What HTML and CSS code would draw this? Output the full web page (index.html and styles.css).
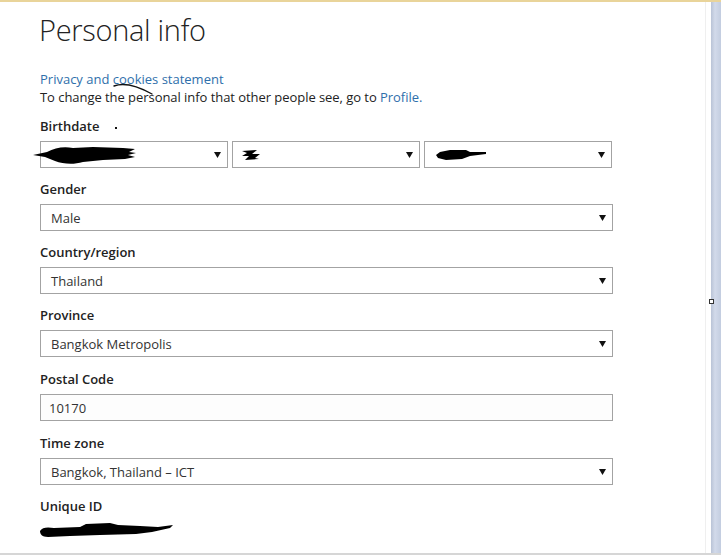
FILE: index.html
```html
<!DOCTYPE html>
<html>
<head>
<meta charset="utf-8">
<link rel="stylesheet" href="styles.css">
</head>
<body>
<div class="window">
  <div class="content">
    <h1 class="title">Personal info</h1>
    <div class="intro">
      <a class="link privacy" href="#">Privacy and cookies statement</a>
      <svg class="pen-stroke" width="44" height="14" viewBox="0 0 44 14"><path d="M2 4 C 10 1, 22 2, 40 12" fill="none" stroke="#111" stroke-width="1.4" stroke-linecap="round"/></svg>
      <p class="note">To change the personal info that other people see, go to <a class="link" href="#">Profile.</a></p>
    </div>

    <div class="field">
      <div class="label">Birthdate <span class="dot"></span></div>
      <div class="row3">
        <div class="select">
          <svg class="redact r1" width="104" height="22" viewBox="0 0 104 22"><path d="M0 11 L14 8 C 22 4, 30 2, 40 4 L 60 3 L 90 4 L 102 5 L 96 8 L 103 9 L 95 11 L 102 13 L 92 15 L 70 16 L 50 18 C 40 21, 30 20, 22 17 L 12 13 Z" fill="#000"/></svg>
          <svg class="arrow" width="7" height="6" viewBox="0 0 7 6"><path d="M0 0 H7 L3.5 6 Z" fill="#111"/></svg>
        </div>
        <div class="select">
          <svg class="redact r2" width="20" height="12" viewBox="0 0 20 12"><path d="M1 2 L16 1 L11 5 L19 5 L14 9 L18 10 L4 11 L8 7 L1 7 L6 4 Z" fill="#000"/></svg>
          <svg class="arrow" width="7" height="6" viewBox="0 0 7 6"><path d="M0 0 H7 L3.5 6 Z" fill="#111"/></svg>
        </div>
        <div class="select">
          <svg class="redact r3" width="52" height="12" viewBox="0 0 52 12"><path d="M0 6 L4 3 L14 1 L30 1 L34 3 L50 3 L50 5 L34 7 L26 10 L10 11 L2 9 Z" fill="#000"/></svg>
          <svg class="arrow" width="7" height="6" viewBox="0 0 7 6"><path d="M0 0 H7 L3.5 6 Z" fill="#111"/></svg>
        </div>
      </div>
    </div>

    <div class="field">
      <div class="label">Gender</div>
      <div class="select"><span class="value">Male</span><svg class="arrow" width="7" height="6" viewBox="0 0 7 6"><path d="M0 0 H7 L3.5 6 Z" fill="#111"/></svg></div>
    </div>

    <div class="field">
      <div class="label">Country/region</div>
      <div class="select"><span class="value">Thailand</span><svg class="arrow" width="7" height="6" viewBox="0 0 7 6"><path d="M0 0 H7 L3.5 6 Z" fill="#111"/></svg></div>
    </div>

    <div class="field">
      <div class="label">Province</div>
      <div class="select"><span class="value">Bangkok Metropolis</span><svg class="arrow" width="7" height="6" viewBox="0 0 7 6"><path d="M0 0 H7 L3.5 6 Z" fill="#111"/></svg></div>
    </div>

    <div class="field wide-gap">
      <div class="label">Postal Code</div>
      <div class="input"><span class="value">10170</span></div>
    </div>

    <div class="field wide-gap">
      <div class="label">Time zone</div>
      <div class="select"><span class="value">Bangkok, Thailand – ICT</span><svg class="arrow" width="7" height="6" viewBox="0 0 7 6"><path d="M0 0 H7 L3.5 6 Z" fill="#111"/></svg></div>
    </div>

    <div class="field last">
      <div class="label">Unique ID</div>
      <svg class="redact r4" width="134" height="16" viewBox="0 0 134 16"><path d="M0 9 C 2 5, 8 5, 14 6 L 40 5 L 46 2 L 70 1 L 78 3 L 100 4 L 118 5 L 133 3 L 130 6 L 112 10 L 96 12 L 60 13 L 30 14 L 8 15 C 2 15, 0 12, 0 9 Z" fill="#000"/></svg>
    </div>
  </div>
  <div class="scroll"><span class="handle"></span></div>
</div>
</body>
</html>
```
FILE: styles.css
```css
* { box-sizing: border-box; }
html, body { margin: 0; padding: 0; background: #fff; }
body {
  width: 721px;
  height: 555px;
  overflow: hidden;
  font-family: "Open Sans", "Noto Sans", sans-serif;
  color: #222;
}
.window {
  display: flex;
  width: 721px;
  height: 555px;
  border-top: 2px solid #e9d49a;
  border-bottom: 2px solid #d6d6d6;
}
.content {
  flex: 1;
  border-right: 1px solid #efefef;
  margin-right: 5px;
  padding-left: 40px;
  display: flex;
  flex-direction: column;
}
.title {
  margin: 8px 0 0 -1px;
  font-size: 29px;
  font-weight: 300;
  line-height: 40px;
  color: #222;
  letter-spacing: -0.3px;
}
.intro {
  position: relative;
  margin-top: 20px;
  font-size: 13px;
  line-height: 18px;
}
.link { color: #2f6fab; text-decoration: none; }
.privacy { display: block; }
.pen-stroke { position: absolute; left: 72px; top: 12px; }
.note { margin: 0; color: #222; letter-spacing: -0.05px; }
.field {
  display: flex;
  flex-direction: column;
  margin-top: 11px;
}
.field + .field { margin-top: 12px; }
.field.wide-gap { margin-top: 13px; }
.label {
  font-size: 13px;
  font-weight: 600;
  line-height: 18px;
  margin-bottom: 6px;
  color: #222;
  position: relative;
}
.dot {
  position: absolute;
  left: 75px;
  top: 10px;
  width: 2px;
  height: 2px;
  background: #111;
}
.row3 {
  display: grid;
  grid-template-columns: repeat(3, 188px);
  gap: 4px;
}
.select, .input {
  position: relative;
  width: 573px;
  height: 27px;
  border: 1px solid #a3a3a3;
  background: #fff;
  display: flex;
  align-items: center;
  padding-left: 10px;
  font-size: 13px;
  color: #333;
}
.row3 .select { width: 188px; }
.input { padding-left: 8px; background: #fdfdfd; }
.arrow { position: absolute; right: 6px; top: 10px; }
.redact { position: absolute; }
.r1 { left: -8px; top: 2px; }
.r2 { left: 8px; top: 7px; }
.r3 { left: 11px; top: 7px; }
.r4 { position: static; margin-top: 1px; }
.scroll {
  position: relative;
  width: 10px;
  background: linear-gradient(to right, #b9c3d6, #d2daea 40%, #c3cde0);
}
.handle {
  position: absolute;
  left: -2px;
  top: 297px;
  width: 5px;
  height: 5px;
  border: 1px solid #333;
  background: #fff;
}
```
